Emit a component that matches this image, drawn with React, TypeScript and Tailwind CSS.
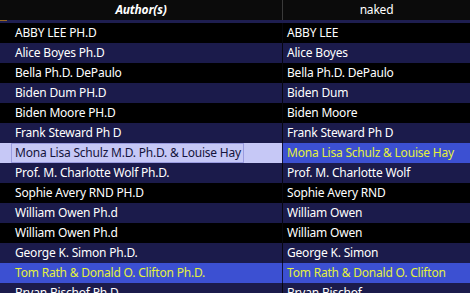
import React from "react";

type Row = { a: string; b: string; kind: "black" | "navy" | "focus" | "sel" };

const rows: Row[] = [
  { a: "ABBY LEE PH.D", b: "ABBY LEE", kind: "black" },
  { a: "Alice Boyes Ph.D", b: "Alice Boyes", kind: "navy" },
  { a: "Bella Ph.D. DePaulo", b: "Bella Ph.D. DePaulo", kind: "black" },
  { a: "Biden Dum PH.D", b: "Biden Dum", kind: "navy" },
  { a: "Biden Moore PH.D", b: "Biden Moore", kind: "black" },
  { a: "Frank Steward Ph D", b: "Frank Steward Ph D", kind: "navy" },
  { a: "Mona Lisa Schulz M.D. Ph.D. & Louise Hay", b: "Mona Lisa Schulz & Louise Hay", kind: "focus" },
  { a: "Prof. M. Charlotte Wolf Ph.D.", b: "Prof. M. Charlotte Wolf", kind: "navy" },
  { a: "Sophie Avery RND PH.D", b: "Sophie Avery RND", kind: "black" },
  { a: "William Owen Ph.d", b: "William Owen", kind: "navy" },
  { a: "William Owen Ph.d", b: "William Owen", kind: "black" },
  { a: "George K. Simon Ph.D.", b: "George K. Simon", kind: "navy" },
  { a: "Tom Rath & Donald O. Clifton Ph.D.", b: "Tom Rath & Donald O. Clifton", kind: "sel" },
  { a: "Bryan Bischof Ph.D.", b: "Bryan Bischof", kind: "navy" },
];

function LeftCell({ r }: { r: Row }) {
  if (r.kind === "focus") {
    return (
      <div className="h-[20px] bg-[#c6c8f6] flex items-stretch pl-[11px]">
        <div className="border border-[#9a9ce0] pl-[3px] pr-[2px] flex items-center text-[#14143c] whitespace-nowrap">
          {r.a}
        </div>
      </div>
    );
  }
  const bg =
    r.kind === "black" ? "bg-black" : r.kind === "navy" ? "bg-[#1b1b4b]" : "bg-[#3c50d2]";
  const color = r.kind === "sel" ? "text-[#e4f03c]" : "text-white";
  return (
    <div className={`h-[20px] ${bg} ${color} flex items-center pl-[15px] whitespace-nowrap`}>
      {r.a}
    </div>
  );
}

function RightCell({ r }: { r: Row }) {
  const bg =
    r.kind === "black"
      ? "bg-black"
      : r.kind === "navy"
      ? "bg-[#1b1b4b]"
      : "bg-[#3c50d2]";
  const color = r.kind === "sel" || r.kind === "focus" ? "text-[#e4f03c]" : "text-white";
  const line = r.kind === "focus" || r.kind === "sel" ? "border-[#14143c]" : "border-[#07070f]";
  return (
    <div className={`h-[20px] ${bg} ${color} border-l ${line} flex items-center pl-[4px] whitespace-nowrap overflow-hidden`}>
      {r.b}
    </div>
  );
}

export default function App() {
  return (
    <div
      className="w-[470px] h-[293px] overflow-hidden bg-black text-[12px] leading-none tracking-[-0.2px]"
      style={{ fontFamily: "'Noto Sans', 'Open Sans', sans-serif" }}
    >
      <div className="flex h-[20px] bg-[#0b0b0b] text-white">
        <div className="w-[282px] flex items-center justify-center font-bold italic">Author(s)</div>
        <div className="flex-1 border-l border-[#3a3a3a] flex items-center justify-center">naked</div>
      </div>
      <div className="flex h-[3px] bg-[#1e1e50]">
        <div className="w-[7px] h-[1px] bg-[#9a6a24]" />
      </div>
      <div className="grid grid-cols-[282px_1fr]">
        {rows.map((r, i) => (
          <React.Fragment key={i}>
            <LeftCell r={r} />
            <RightCell r={r} />
          </React.Fragment>
        ))}
      </div>
    </div>
  );
}
